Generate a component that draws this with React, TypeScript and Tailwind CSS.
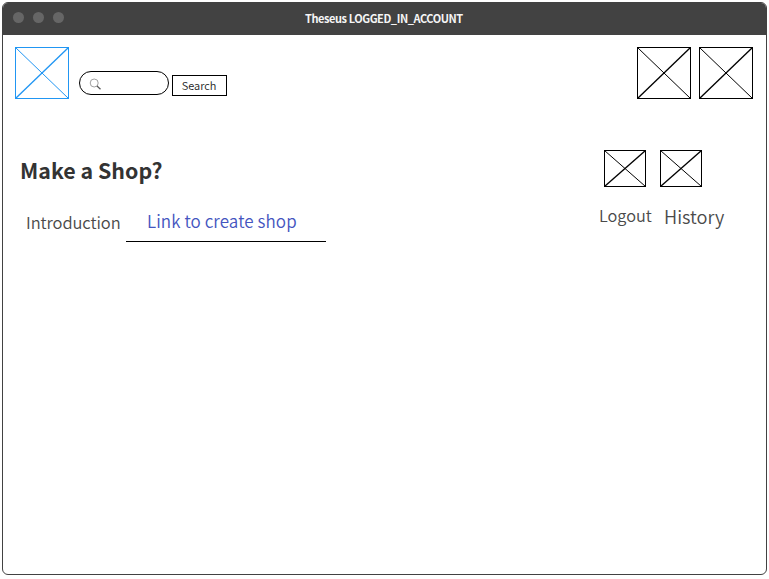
type PlaceholderProps = { width: number; height: number; className: string };

function Placeholder({ width, height, className }: PlaceholderProps) {
  return (
    <svg width={width} height={height} viewBox={`0 0 ${width} ${height}`} fill="none" stroke="currentColor" className={`block shrink-0 ${className}`}>
      <rect x="0.5" y="0.5" width={width - 1} height={height - 1} />
      <path d={`M0.5 0.5L${width - 0.5} ${height - 0.5}`} />
      <path d={`M${width - 0.5} 0.5L0.5 ${height - 0.5}`} strokeWidth="1.35" />
    </svg>
  );
}

function TitleBar() {
  return (
    <header className="flex h-8 items-start bg-[#424242] text-[#f5f5f5]">
      <div className="ml-[10px] mt-[9px] flex w-[51px] gap-[9px]">
        <span className="size-[11px] rounded-full bg-[#666]" />
        <span className="size-[11px] rounded-full bg-[#666]" />
        <span className="size-[11px] rounded-full bg-[#666]" />
      </div>
      <h1 className="ml-[241px] mt-[7px] whitespace-nowrap text-[11px] leading-4 font-bold tracking-[-0.43px]">Theseus LOGGED_IN_ACCOUNT</h1>
    </header>
  );
}

function Toolbar() {
  return (
    <div className="flex h-[52px] items-start pl-3 pr-[13px]">
      <Placeholder width={54} height={52} className="text-[#2196f3]" />
      <label className="ml-[10px] mt-6 flex h-6 w-[90px] items-start rounded-full border border-black pl-[9px] pt-[6px]">
        <svg width="13" height="13" viewBox="0 0 13 13" fill="none" stroke="#888" strokeWidth="0.8" className="shrink-0">
          <circle cx="5.2" cy="5" r="4" />
          <path d="M8 8L11.5 11.3" stroke="#555" strokeWidth="1.2" />
        </svg>
        <input aria-label="Search" className="w-14 bg-transparent text-[10px] outline-none" />
      </label>
      <button className="ml-[3px] mt-7 h-[21px] w-[55px] border border-black pr-px text-[11px] leading-[19px] font-[350] text-[#222]">Search</button>
      <div className="ml-auto flex gap-2">
        <Placeholder width={54} height={52} className="text-black" />
        <Placeholder width={54} height={52} className="text-black" />
      </div>
    </div>
  );
}

export default function App() {
  return (
    <div className="h-[579px] w-[769px] overflow-hidden bg-white pl-[2px] pt-[2px] font-['Noto_Sans_CJK_SC',sans-serif]">
      <div className="flex h-[573px] w-[765px] flex-col overflow-hidden rounded-[6px] border border-[#424242] bg-white">
        <TitleBar />
        <main className="pt-3">
          <Toolbar />
          <div className="mt-[51px] flex">
            <section className="w-[590px]">
              <h2 className="ml-[17px] mt-[4px] whitespace-nowrap text-[21.4px] leading-8 font-bold text-[#333]">Make a Shop?</h2>
              <div className="mt-[23px] flex h-[33px] items-start">
                <p className="ml-[23px] mt-px w-[100px] whitespace-nowrap text-[16.5px] leading-6 font-[350] tracking-[-0.08px] text-[#4a4a4a]">Introduction</p>
                <a className="h-[33px] w-[200px] border-b border-black pl-[21px] whitespace-nowrap text-[17px] leading-6 font-[350] tracking-[0.08px] text-[#4455c0]">Link to create shop</a>
              </div>
            </section>
            <aside className="ml-[6px]">
              <div className="ml-[5px] flex gap-[14px]">
                <Placeholder width={42} height={37} className="text-black" />
                <Placeholder width={42} height={37} className="text-black" />
              </div>
              <div className="mt-[16px] flex items-start whitespace-nowrap font-[350] text-[#4a4a4a]">
                <span className="w-[65px] text-[16.3px] leading-6">Logout</span>
                <span className="mt-[1px] text-[18.2px] leading-6">History</span>
              </div>
            </aside>
          </div>
        </main>
      </div>
    </div>
  );
}
